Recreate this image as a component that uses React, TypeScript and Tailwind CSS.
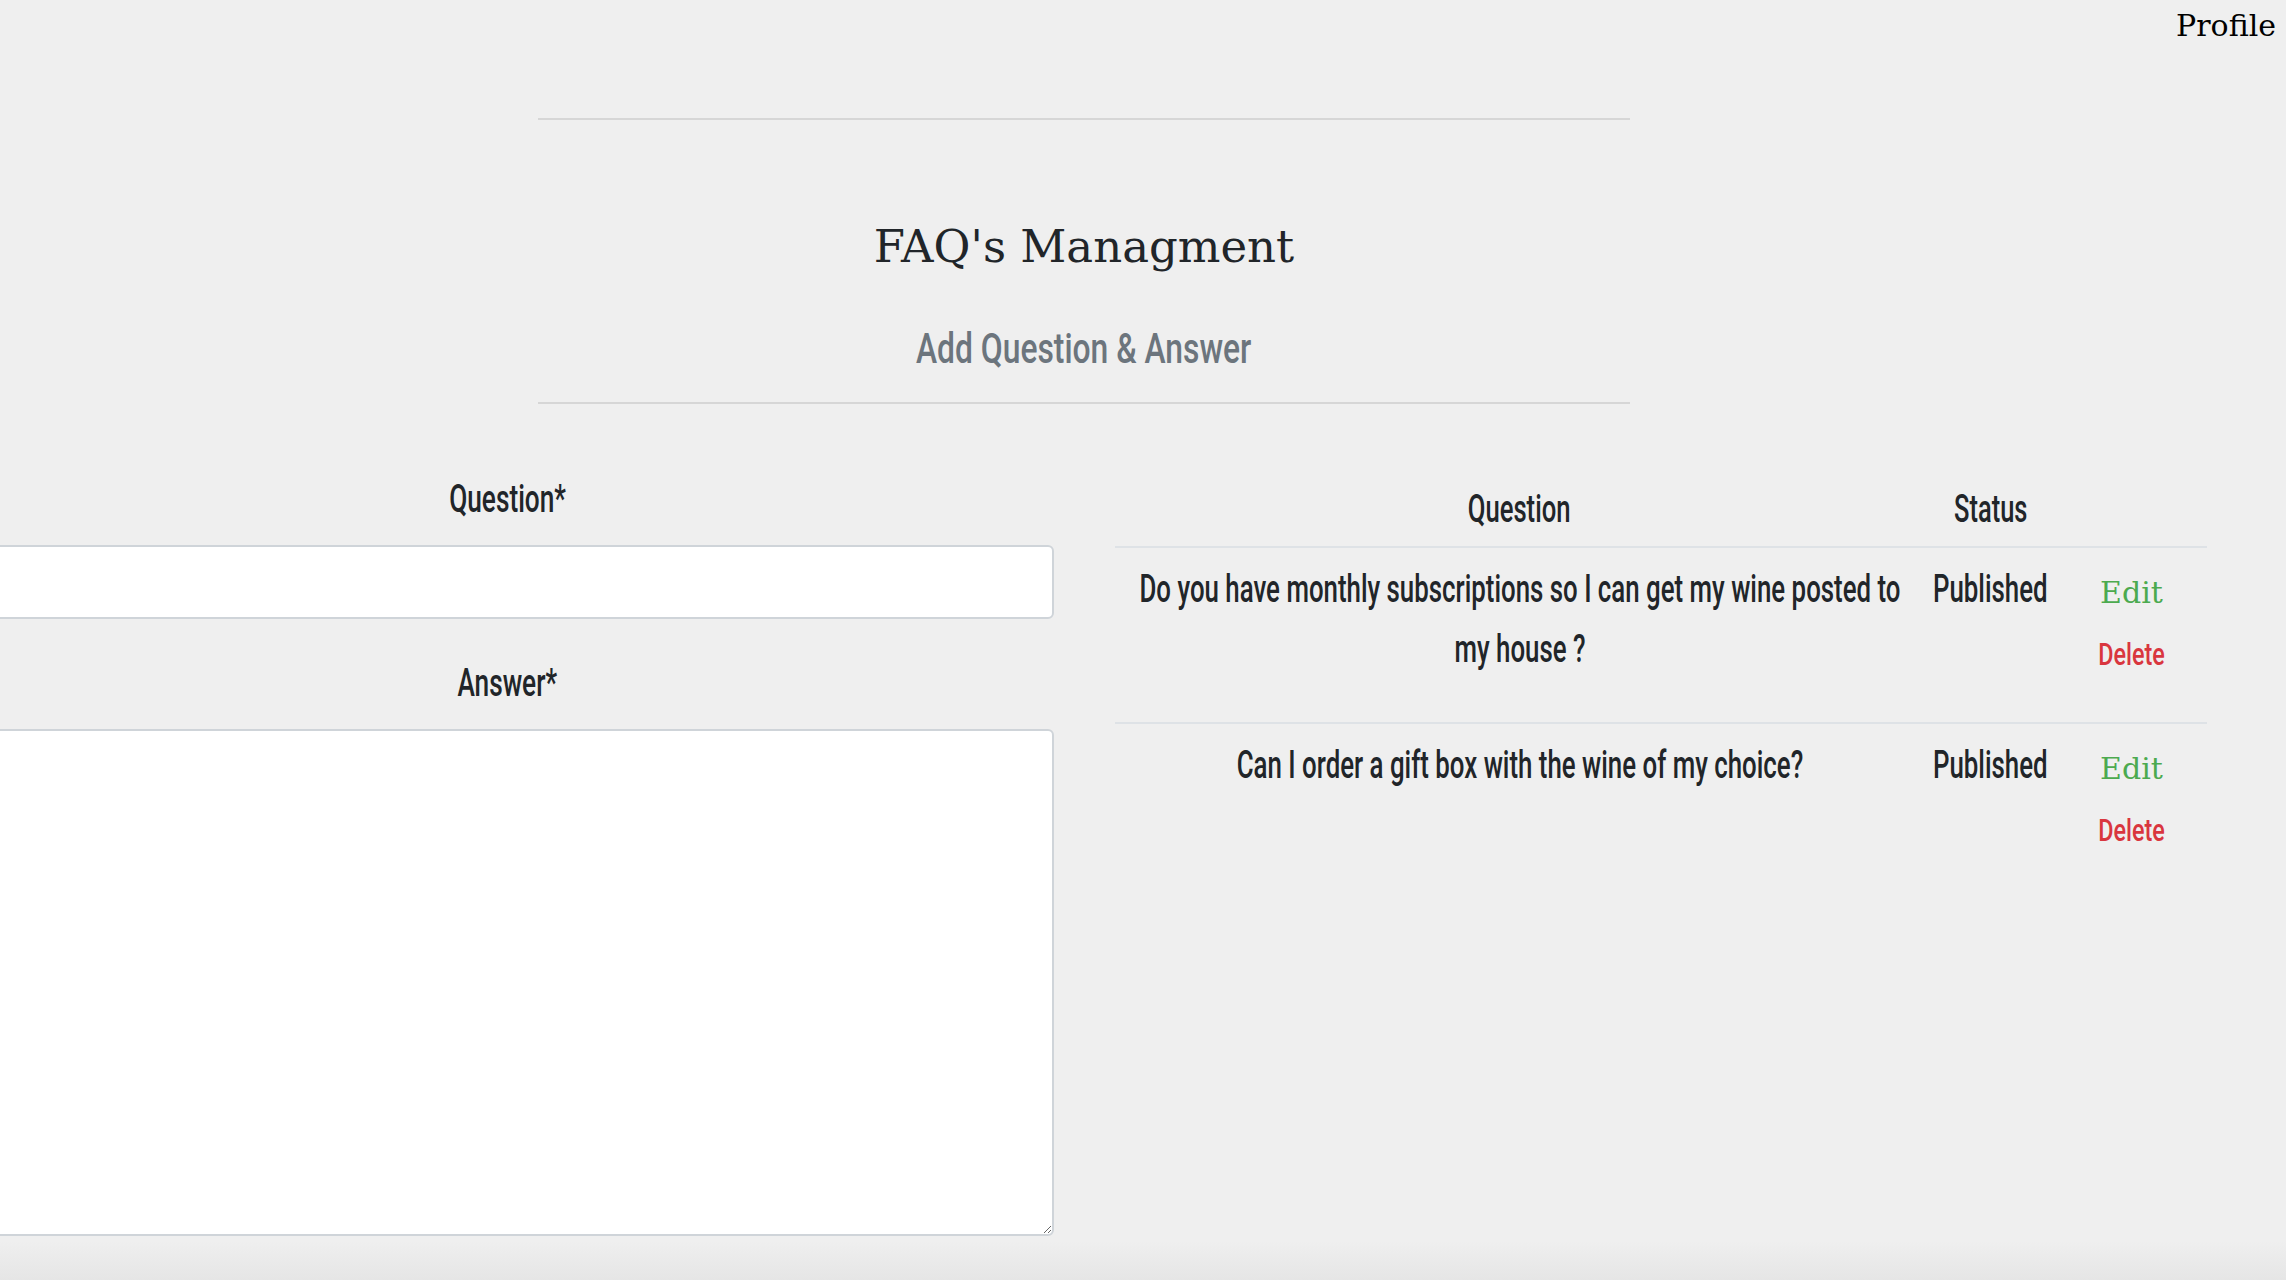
const cond = "font-['Roboto','DejaVu_Sans',sans-serif] font-medium";
const serif = "font-['DejaVu_Serif',serif]";

function Sq({ children, className = "" }: { children: React.ReactNode; className?: string }) {
  return <span className={`inline-block shrink-0 whitespace-nowrap ${className}`}>{children}</span>;
}

export default function App() {
  const rows = [
    "Do you have monthly subscriptions so I can get my wine posted to my house ?",
    "Can I order a gift box with the wine of my choice?",
  ];
  return (
    <div className="min-h-screen w-full overflow-hidden bg-[#efefef] text-[#212529]">
      <nav className="flex justify-end pr-[10px] pt-[6px]">
        <a className={`${serif} text-[30px] leading-[40px] text-black`}>Profile</a>
      </nav>
      <div className="flex w-[2168px] flex-col items-center">
        <div className="mt-[72px] w-[1092px] border-t-2 border-[#d6d6d6]" />
        <h1 className={`${serif} mt-[100px] text-[45px] leading-[54px]`}>FAQ's Managment</h1>
        <h2 className={`${cond} mt-[50px] flex w-full justify-center text-[43px] leading-[48px] text-[#6c757d]`}>
          <Sq className="scale-x-[0.74]">Add Question &amp; Answer</Sq>
        </h2>
        <div className="mt-[30px] w-[1092px] border-t-2 border-[#d6d6d6]" />
        <div className="flex w-[2245px] shrink-0 gap-[61px]">
          <form className="flex w-[1092px] flex-col pt-[75px]">
            <label className={`${cond} flex justify-center text-[38px] leading-[40px]`}>
              <Sq className="scale-x-[0.69]">Question*</Sq>
            </label>
            <input
              type="text"
              className="mt-[26px] h-[74px] w-full rounded-[6px] border-2 border-[#cfd4d9] bg-white px-4 outline-none"
            />
            <label className={`${cond} mt-[44px] flex justify-center text-[38px] leading-[40px]`}>
              <Sq className="scale-x-[0.69]">Answer*</Sq>
            </label>
            <textarea className="mt-[26px] h-[507px] w-full rounded-[6px] border-2 border-[#cfd4d9] bg-white px-4 outline-none" />
          </form>
          <div className={`${cond} w-[1092px] pt-[64px] text-[38px]`}>
            <div className="grid h-[80px] grid-cols-[810px_132px_150px] border-b-2 border-[#dee2e6] pt-[11px] leading-[60px]">
              <div className="flex justify-center">
                <Sq className="scale-x-[0.675]">Question</Sq>
              </div>
              <div className="flex justify-center">
                <Sq className="scale-x-[0.67]">Status</Sq>
              </div>
              <div />
            </div>
            {rows.map((q, i) => (
              <div
                key={i}
                className={`grid grid-cols-[810px_132px_150px] pb-[41px] pt-[11px] ${
                  i > 0 ? "border-t-2 border-[#dee2e6]" : ""
                }`}
              >
                <div className="flex justify-center px-[18px]">
                  <div className="w-[1140px] shrink-0 scale-x-[0.68] text-center leading-[60px]">{q}</div>
                </div>
                <div className="flex justify-center leading-[60px]">
                  <Sq className="scale-x-[0.68]">Published</Sq>
                </div>
                <div className="flex flex-col items-center">
                  <a className={`${serif} text-[30px] leading-[68px] text-[#4caa4f]`}>Edit</a>
                  <a className="flex justify-center text-[32px] leading-[54px] text-[#d9363e]">
                    <Sq className="scale-x-[0.73]">Delete</Sq>
                  </a>
                </div>
              </div>
            ))}
          </div>
        </div>
      </div>
      <div className="mt-[5px] h-[45px] w-full bg-gradient-to-b from-[#efefef] to-[#e4e4e4]" />
    </div>
  );
}
